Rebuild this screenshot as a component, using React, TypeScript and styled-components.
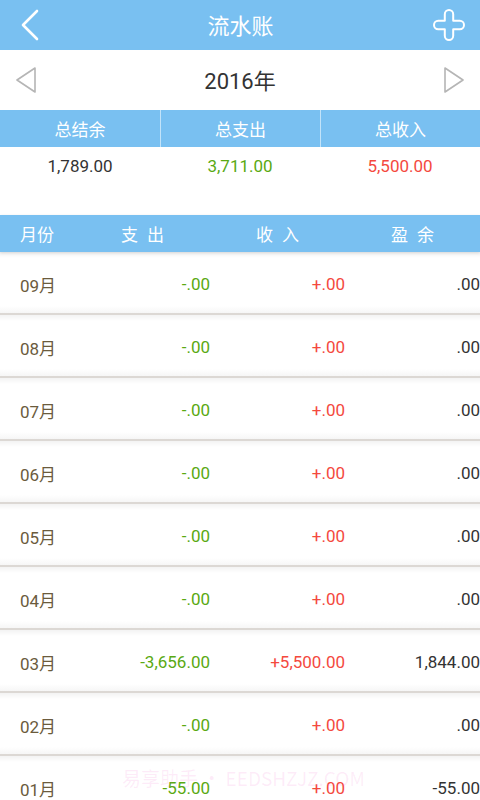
import styled, { createGlobalStyle } from 'styled-components';

const GlobalStyle = createGlobalStyle`
	html, body {
		margin: 0;
		padding: 0;
		overflow: hidden;
		background: #ffffff;
	}
	body {
		font-family: Roboto, "Noto Sans CJK SC", sans-serif;
	}
`;

const BLUE = '#79c0f1';
const GREEN = '#5aa912';
const RED = '#f4493e';

const Page = styled.div`
	position: relative;
	width: 480px;
	height: 800px;
	overflow: hidden;
	background: #fff;
`;

const TopBar = styled.header`
	height: 50px;
	background: ${BLUE};
	display: flex;
	align-items: center;
	justify-content: space-between;
	padding: 0 15px 0 14px;
`;

const Title = styled.h1`
	margin: 0 0 2px 2px;
	font-size: 22px;
	font-weight: 400;
	color: #fff;
	font-family: "Noto Sans CJK SC", sans-serif;
`;

const IconButton = styled.button`
	border: none;
	background: none;
	padding: 0;
	display: flex;
	align-items: center;
	justify-content: center;
	width: 32px;
	height: 40px;
`;

const YearBar = styled.div`
	height: 60px;
	display: flex;
	align-items: center;
	justify-content: space-between;
	padding: 0 16px 0 16px;
`;

const YearText = styled.span`
	font-size: 22px;
	color: #333;
	margin-bottom: 3px;
	font-family: Roboto, "Noto Sans CJK SC", sans-serif;
`;

const SummaryHead = styled.div`
	height: 37px;
	background: ${BLUE};
	display: grid;
	grid-template-columns: repeat(3, 1fr);
`;

const SummaryLabel = styled.div<{ $divider?: boolean }>`
	display: flex;
	align-items: center;
	justify-content: center;
	color: #fff;
	font-size: 17px;
	font-family: "Noto Sans CJK SC", sans-serif;
	border-left: ${({ $divider }) => ($divider ? '1px solid rgba(255,255,255,0.55)' : 'none')};
`;

const SummaryValues = styled.div`
	height: 38px;
	margin-bottom: 30px;
	display: grid;
	grid-template-columns: repeat(3, 1fr);
`;

const SummaryValue = styled.div<{ $color: string }>`
	display: flex;
	align-items: center;
	justify-content: center;
	font-size: 17px;
	color: ${({ $color }) => $color};
`;

const TableHead = styled.div`
	height: 37px;
	background: ${BLUE};
	display: grid;
	grid-template-columns: 75px repeat(3, 135px);
	align-items: center;
	color: #fff;
	font-size: 17px;
	font-family: "Noto Sans CJK SC", sans-serif;
	box-shadow: 0 1px 3px rgba(0, 0, 0, 0.12);
	position: relative;
`;

const HeadCell = styled.span<{ $first?: boolean }>`
	text-align: ${({ $first }) => ($first ? 'left' : 'center')};
	padding-left: ${({ $first }) => ($first ? '20px' : '0')};
	word-spacing: ${({ $first }) => ($first ? '0' : '5px')};
	white-space: pre;
`;

const Row = styled.div`
	height: 61px;
	display: grid;
	grid-template-columns: 75px repeat(3, 135px);
	align-items: center;
	padding-top: 0;
	border-bottom: 2px solid #dcd8d4;
	background: linear-gradient(to bottom, #f3f3f3 0px, #ffffff 6px, #ffffff 54px, #f6f6f6 61px);
`;

const MonthCell = styled.span`
	padding: 3px 0 0 20px;
	font-size: 17px;
	color: #6b5b3d;
	font-family: Roboto, "Noto Sans CJK SC", sans-serif;
`;

const AmountCell = styled.span<{ $color: string }>`
	padding-top: 3px;
	text-align: right;
	font-size: 17px;
	color: ${({ $color }) => $color};
	white-space: nowrap;
`;

const Watermark = styled.div`
	position: absolute;
	left: 122px;
	top: 764px;
	font-size: 19px;
	color: rgba(240, 100, 200, 0.12);
	font-family: "Noto Sans CJK SC", sans-serif;
	pointer-events: none;
	white-space: nowrap;
`;

const BackIcon = () => (
	<svg width="20" height="32" viewBox="0 0 20 32">
		<path d="M17 2 L3 16 L17 30" fill="none" stroke="#fff" strokeWidth="2.6" strokeLinecap="round" strokeLinejoin="round" />
	</svg>
);

const PlusIcon = () => (
	<svg width="32" height="32" viewBox="0 0 32 32">
		<path
			d="M11.8 5.2 A4.2 4.2 0 0 1 20.2 5.2 V11.8 H26.8 A4.2 4.2 0 0 1 26.8 20.2 H20.2 V26.8 A4.2 4.2 0 0 1 11.8 26.8 V20.2 H5.2 A4.2 4.2 0 0 1 5.2 11.8 H11.8 Z"
			fill="none"
			stroke="#fff"
			strokeWidth="2"
			strokeLinejoin="round"
		/>
	</svg>
);

const Triangle = ({ dir }: { dir: 'left' | 'right' }) => (
	<svg width="20" height="26" viewBox="0 0 20 26">
		<path
			d={dir === 'left' ? 'M19 1 L1 13 L19 25 Z' : 'M1 1 L19 13 L1 25 Z'}
			fill="none"
			stroke="#b5b5b5"
			strokeWidth="1.6"
			strokeLinejoin="round"
		/>
	</svg>
);

const months = [
	{ month: '09月', out: '-.00', inc: '+.00', bal: '.00' },
	{ month: '08月', out: '-.00', inc: '+.00', bal: '.00' },
	{ month: '07月', out: '-.00', inc: '+.00', bal: '.00' },
	{ month: '06月', out: '-.00', inc: '+.00', bal: '.00' },
	{ month: '05月', out: '-.00', inc: '+.00', bal: '.00' },
	{ month: '04月', out: '-.00', inc: '+.00', bal: '.00' },
	{ month: '03月', out: '-3,656.00', inc: '+5,500.00', bal: '1,844.00' },
	{ month: '02月', out: '-.00', inc: '+.00', bal: '.00' },
	{ month: '01月', out: '-55.00', inc: '+.00', bal: '-55.00' },
];

function App() {
	return (
		<Page>
			<GlobalStyle />
			<TopBar>
				<IconButton>
					<BackIcon />
				</IconButton>
				<Title>流水账</Title>
				<IconButton>
					<PlusIcon />
				</IconButton>
			</TopBar>

			<YearBar>
				<Triangle dir="left" />
				<YearText>2016年</YearText>
				<Triangle dir="right" />
			</YearBar>

			<SummaryHead>
				<SummaryLabel>总结余</SummaryLabel>
				<SummaryLabel $divider>总支出</SummaryLabel>
				<SummaryLabel $divider>总收入</SummaryLabel>
			</SummaryHead>
			<SummaryValues>
				<SummaryValue $color="#333">1,789.00</SummaryValue>
				<SummaryValue $color={GREEN}>3,711.00</SummaryValue>
				<SummaryValue $color={RED}>5,500.00</SummaryValue>
			</SummaryValues>

			<TableHead>
				<HeadCell $first>月份</HeadCell>
				<HeadCell>支 出</HeadCell>
				<HeadCell>收 入</HeadCell>
				<HeadCell>盈 余</HeadCell>
			</TableHead>

			{months.map((row) => (
				<Row key={row.month}>
					<MonthCell>{row.month}</MonthCell>
					<AmountCell $color={GREEN}>{row.out}</AmountCell>
					<AmountCell $color={RED}>{row.inc}</AmountCell>
					<AmountCell $color="#333">{row.bal}</AmountCell>
				</Row>
			))}

			<Watermark>易享助手 • EEDSHZJZ.COM</Watermark>
		</Page>
	);
}

export default App;
